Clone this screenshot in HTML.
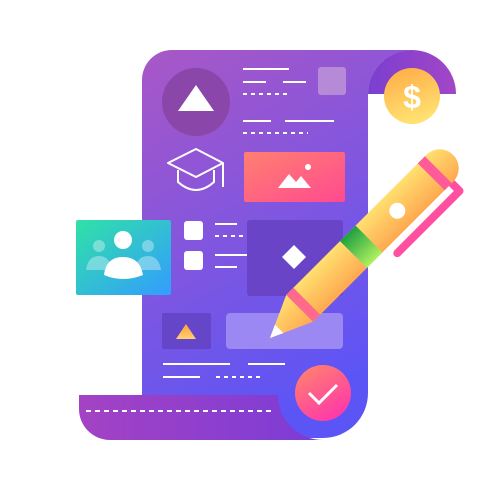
<!DOCTYPE html>
<html><head><style>html,body{margin:0;padding:0;background:#fff}svg{display:block}</style></head><body>
<svg width="500" height="500" viewBox="0 0 500 500" xmlns="http://www.w3.org/2000/svg">
<defs>
<linearGradient id="body" x1="0" y1="0" x2="0.4" y2="1"><stop offset="0" stop-color="#a957c6"/><stop offset="1" stop-color="#5c55f6"/></linearGradient>
<linearGradient id="strip" x1="0" y1="0" x2="1" y2="0"><stop offset="0" stop-color="#a442c4"/><stop offset="1" stop-color="#7b3cd6"/></linearGradient>
<linearGradient id="curl" x1="0" y1="0" x2="1" y2="0"><stop offset="0" stop-color="#7a3fd0"/><stop offset="1" stop-color="#a346c6"/></linearGradient>
<linearGradient id="pink" x1="0" y1="0" x2="1" y2="1"><stop offset="0" stop-color="#ff8070"/><stop offset="1" stop-color="#ff4a90"/></linearGradient>
<linearGradient id="chk" x1="0" y1="0" x2="0.6" y2="1"><stop offset="0" stop-color="#ff8868"/><stop offset="1" stop-color="#ff3aa8"/></linearGradient>
<linearGradient id="grp" x1="0" y1="0" x2="1" y2="1"><stop offset="0" stop-color="#30e2a6"/><stop offset="1" stop-color="#339cff"/></linearGradient>
<linearGradient id="coin" x1="0" y1="0" x2="0.3" y2="1"><stop offset="0" stop-color="#ffaa45"/><stop offset="1" stop-color="#ffe070"/></linearGradient>
<linearGradient id="pen" x1="0" y1="0" x2="0" y2="1"><stop offset="0" stop-color="#ffe070"/><stop offset="1" stop-color="#ffa850"/></linearGradient>
<linearGradient id="grn" x1="0" y1="0" x2="0" y2="1"><stop offset="0" stop-color="#1ea040"/><stop offset="1" stop-color="#b0f060"/></linearGradient>
<linearGradient id="tri" x1="0" y1="0" x2="0" y2="1"><stop offset="0" stop-color="#ffa040"/><stop offset="1" stop-color="#ffd070"/></linearGradient>
</defs>
<!-- curl -->
<path d="M368 94 A44 44 0 0 1 456 94 Z" fill="url(#curl)"/>
<path d="M380 50 L412 50 A44 44 0 0 0 368 94 L368 60 Z" fill="#a050c6"/>
<!-- body -->
<path d="M172 50 L412 50 A44 44 0 0 0 368 94 L368 393 A45 45 0 0 1 323 438 L142 438 L142 80 A30 30 0 0 1 172 50 Z" fill="url(#body)"/>
<!-- bottom strip -->
<path d="M79 395 L278 395 A45 45 0 0 0 323 440 L110 440 A31 31 0 0 1 79 409 Z" fill="url(#strip)"/>
<line x1="86" y1="411" x2="272" y2="411" stroke="#fff" stroke-width="2" stroke-dasharray="5 4"/>
<!-- top circle -->
<circle cx="196" cy="102" r="34" fill="#8a46a8"/>
<path d="M196 85 L214 111 L178 111 Z" fill="#fff"/>
<g stroke="#fff" stroke-width="2">
<line x1="243" y1="69" x2="289" y2="69"/>
<line x1="243" y1="82" x2="266" y2="82"/><line x1="283" y1="82" x2="306" y2="82"/>
<line x1="243" y1="94" x2="288" y2="94" stroke-dasharray="4 4"/>
<line x1="243" y1="121" x2="271" y2="121"/><line x1="285" y1="121" x2="334" y2="121"/>
<line x1="243" y1="133" x2="308" y2="133" stroke-dasharray="4 4"/>
<line x1="215" y1="224" x2="237" y2="224"/>
<line x1="215" y1="236" x2="280" y2="236" stroke-dasharray="4 4"/>
<line x1="215" y1="255" x2="265" y2="255"/>
<line x1="215" y1="267" x2="237" y2="267"/>
<line x1="163" y1="364" x2="230" y2="364"/><line x1="248" y1="364" x2="285" y2="364"/>
<line x1="163" y1="377" x2="200" y2="377"/><line x1="216" y1="377" x2="260" y2="377" stroke-dasharray="4 4"/>
</g>
<rect x="318" y="67" width="28" height="28" rx="3" fill="#b78ad8"/>
<!-- cap -->
<g fill="none" stroke="#fff" stroke-width="2" stroke-linejoin="round">
<path d="M168 163 L196 149 L223 163 L196 177 Z"/>
<path d="M178 170 L178 182 Q196 198 214 182 L214 170"/>
<path d="M223 163 L223 187"/>
</g>
<!-- image rect -->
<rect x="244" y="152" width="101" height="50" rx="2" fill="url(#pink)"/>
<path d="M278 188 L289 174 L296 182 L301 176 L311 188 Z" fill="#fff"/>
<circle cx="308" cy="167" r="3" fill="#fff"/>
<!-- checkboxes -->
<rect x="184" y="221" width="19" height="19" rx="3" fill="#fff"/>
<rect x="184" y="251" width="19" height="19" rx="3" fill="#fff"/>
<rect x="247" y="220" width="96" height="76" rx="3" fill="#6a44c6"/>
<path d="M294 245 L306 257 L294 269 L282 257 Z" fill="#fff"/>
<!-- group card -->
<rect x="76" y="220" width="95" height="75" rx="2" fill="url(#grp)"/>
<circle cx="99" cy="246" r="6" fill="#fff" opacity="0.35"/>
<circle cx="148" cy="246" r="6" fill="#fff" opacity="0.35"/>
<path d="M86 270 Q88 256 99 256 Q110 256 112 270 Z" fill="#fff" opacity="0.35"/>
<path d="M135 270 Q137 256 148 256 Q159 256 161 270 Z" fill="#fff" opacity="0.35"/>
<circle cx="123" cy="240" r="9" fill="#fff"/>
<path d="M104 275 Q106 257 123 257 Q140 257 143 275 Q123 283 104 275 Z" fill="#fff"/>
<!-- lower rects -->
<rect x="162" y="313" width="49" height="36" rx="2" fill="#6545c8"/>
<path d="M186 324 L196 339 L176 339 Z" fill="url(#tri)"/>
<rect x="226" y="313" width="117" height="36" rx="4" fill="#9b88f2"/>
<!-- check -->
<circle cx="323" cy="393" r="28" fill="url(#chk)"/>
<path d="M309 393 L319 403 L337 385" fill="none" stroke="#fff" stroke-width="3"/>
<!-- coin -->
<circle cx="412" cy="96" r="28" fill="url(#coin)"/>
<text x="412" y="108" text-anchor="middle" font-family="Liberation Sans, sans-serif" font-weight="bold" font-size="32" fill="#fff">$</text>
<!-- pen -->
<g transform="translate(270,338) rotate(-45)">
<path d="M150 30 L238 30 L238 19" fill="none" stroke="#ff4fa0" stroke-width="8" stroke-linecap="round" stroke-linejoin="round"/>
<path d="M0 0 L42 -19 L42 19 Z" fill="url(#pen)"/>
<path d="M0 0 L13 -6 L13 6 Z" fill="#fff"/>
<rect x="42" y="-19" width="200" height="38" fill="url(#pen)"/>
<path d="M240 -19 A19 19 0 0 1 240 19 Z" fill="url(#pen)"/>
<rect x="42" y="-19" width="10" height="38" fill="#ff6a8a"/>
<rect x="118" y="-19" width="22" height="38" fill="url(#grn)"/>
<rect x="228" y="-19" width="10" height="38" fill="#ff5a9a"/>
<circle cx="180" cy="0" r="8" fill="#fff"/>
</g>
</svg>
</body></html>
